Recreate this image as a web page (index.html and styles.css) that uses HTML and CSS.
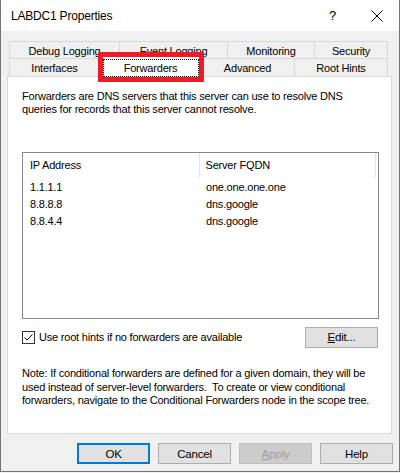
FILE: index.html
```html
<!DOCTYPE html>
<html>
<head>
<meta charset="utf-8">
<link rel="stylesheet" href="styles.css">
</head>
<body>
<div class="window">
  <div class="titlebar">
    <span class="title">LABDC1 Properties</span>
    <span class="help-q">?</span>
    <span class="close">
      <svg width="12" height="12" viewBox="0 0 12 12"><path d="M0.5 0.5 L11.5 11.5 M11.5 0.5 L0.5 11.5" stroke="#000" stroke-width="1" fill="none"/></svg>
    </span>
  </div>

  <div class="tabs">
    <div class="tabrow back">
      <div class="tab w111">Debug Logging</div>
      <div class="tab w108">Event Logging</div>
      <div class="tab w87">Monitoring</div>
      <div class="tab w73">Security</div>
    </div>
    <div class="tabrow front">
      <div class="tab w91">Interfaces</div>
      <div class="tab selected w101"><span class="focus">Forwarders</span></div>
      <div class="tab w94">Advanced</div>
      <div class="tab w93">Root Hints</div>
    </div>
    <div class="highlight"></div>
  </div>

  <div class="panel">
    <p class="desc">Forwarders are DNS servers that this server can use to resolve DNS<br>queries for records that this server cannot resolve.</p>

    <div class="listview">
      <div class="lv-head">
        <div class="col c1">IP Address</div>
        <div class="col c2">Server FQDN</div>
        <div class="col c3"></div>
      </div>
      <div class="lv-row"><div class="col c1">1.1.1.1</div><div class="col c2">one.one.one.one</div></div>
      <div class="lv-row"><div class="col c1">8.8.8.8</div><div class="col c2">dns.google</div></div>
      <div class="lv-row"><div class="col c1">8.8.4.4</div><div class="col c2">dns.google</div></div>
    </div>

    <div class="optrow">
      <label class="check">
        <span class="box">
          <svg width="11" height="11" viewBox="0 0 11 11"><path d="M1.5 5.5 L4 8 L9.5 2.5" stroke="#000" stroke-width="1" fill="none"/></svg>
        </span>
        <span>Use root hints if no forwarders are available</span>
      </label>
      <button class="btn edit"><u>E</u>dit...</button>
    </div>

    <p class="note">Note: If conditional forwarders are defined for a given domain, they will be<br>used instead of server-level forwarders.&nbsp; To create or view conditional<br>forwarders, navigate to the Conditional Forwarders node in the scope tree.</p>
  </div>

  <div class="buttons">
    <button class="btn default">OK</button>
    <button class="btn">Cancel</button>
    <button class="btn disabled"><u>A</u>pply</button>
    <button class="btn">Help</button>
  </div>
</div>
</body>
</html>
```

FILE: styles.css
```css
html, body {
  margin: 0;
  padding: 0;
  background: #f0f0f0;
}
body {
  width: 400px;
  height: 473px;
  overflow: hidden;
  font-family: "Liberation Sans", Arial, sans-serif;
  font-size: 11px;
  letter-spacing: -0.2px;
  color: #000;
}
.window {
  width: 398px;
  height: 471px;
  border-left: 1px solid #747474;
  border-right: 1px solid #747474;
  border-bottom: 1px solid #747474;
  background: #f0f0f0;
  display: flex;
  flex-direction: column;
  white-space: nowrap;
}
.titlebar {
  height: 31px;
  background: #fff;
  display: flex;
  align-items: center;
  position: relative;
}
.title {
  margin-left: 10px;
  font-size: 12px;
  letter-spacing: -0.2px;
}
.help-q {
  position: absolute;
  left: 328px;
  top: 8px;
  font-size: 13px;
}
.close {
  position: absolute;
  left: 370px;
  top: 10px;
  width: 12px;
  height: 12px;
  display: block;
}
.close svg { display: block; }

.tabs {
  margin-top: 10px;
  margin-left: 8px;
  position: relative;
  display: flex;
  flex-direction: column;
}
.tabrow {
  display: flex;
  height: 17px;
}
.tabrow.front {
  height: 18px;
}
.tab {
  box-sizing: border-box;
  border: 1px solid #d9d9d9;
  border-left: none;
  border-bottom: none;
  display: flex;
  align-items: center;
  justify-content: center;
  background: #f0f0f0;
  padding-top: 1px;
}
.tab:first-child { border-left: 1px solid #d9d9d9; }
.w111 { width: 111px; }
.w108 { width: 108px; }
.w87 { width: 87px; }
.w73 { width: 73px; }
.w91 { width: 91px; }
.w101 { width: 101px; }
.w94 { width: 94px; }
.w93 { width: 93px; }
.tab.selected {
  background: #fff;
  border-left: 1px solid #d9d9d9;
  margin-top: -2px;
  height: 21px;
  position: relative;
  z-index: 1;
  padding-top: 0;
}
.focus {
  outline: 1px dotted #000;
  width: 94px;
  height: 16px;
  display: flex;
  align-items: center;
  justify-content: center;
  margin-top: 1px;
}
.highlight {
  position: absolute;
  left: 89px;
  top: 11px;
  width: 96px;
  height: 20px;
  border: 5px solid #ed1c24;
  z-index: 2;
}

.panel {
  margin-left: 6px;
  width: 385px;
  height: 358px;
  box-sizing: border-box;
  border: 1px solid #d9d9d9;
  background: #fff;
  padding: 13px 13px 0 14px;
  display: flex;
  flex-direction: column;
}
.desc, .note {
  margin: 0;
  line-height: 13px;
}
.listview {
  margin-top: 36px;
  width: 357px;
  height: 167px;
  box-sizing: border-box;
  border: 1px solid #828790;
  display: flex;
  flex-direction: column;
}
.lv-head {
  display: flex;
  height: 24px;
  align-items: stretch;
}
.col {
  box-sizing: border-box;
  display: flex;
  align-items: center;
}
.c1 { width: 177px; padding-left: 7px; }
.c2 { width: 176px; padding-left: 6px; }
.c3 { width: 2px; }
.lv-head .c1, .lv-head .c2 {
  border-right: 1px solid #e5e5e5;
}
.lv-head .c2 { width: 177px; }
.lv-row {
  display: flex;
  height: 17px;
}
.lv-head + .lv-row { margin-top: 1px; }

.optrow {
  margin-top: 8px;
  display: flex;
  justify-content: space-between;
  align-items: center;
  height: 20px;
}
.check {
  display: flex;
  align-items: center;
  gap: 4px;
}
.box {
  width: 13px;
  height: 13px;
  box-sizing: border-box;
  border: 1px solid #333;
  background: #fff;
  display: flex;
  align-items: center;
  justify-content: center;
}
.box svg { display: block; }

.btn {
  font-family: "Liberation Sans", Arial, sans-serif;
  font-size: 11.5px;
  letter-spacing: -0.2px;
  color: #000;
  background: #e1e1e1;
  border: 1px solid #adadad;
  box-sizing: border-box;
  width: 73px;
  height: 21px;
  padding: 0;
  margin: 0;
}
.btn.default {
  border: 2px solid #0078d7;
}
.btn.disabled {
  background: #cccccc;
  border-color: #bfbfbf;
  color: #a0a0a0;
}
.note {
  margin-top: 20px;
  line-height: 13.5px;
}

.buttons {
  margin-top: 9px;
  display: flex;
  justify-content: flex-end;
  gap: 8px;
  padding-right: 6px;
}
```
